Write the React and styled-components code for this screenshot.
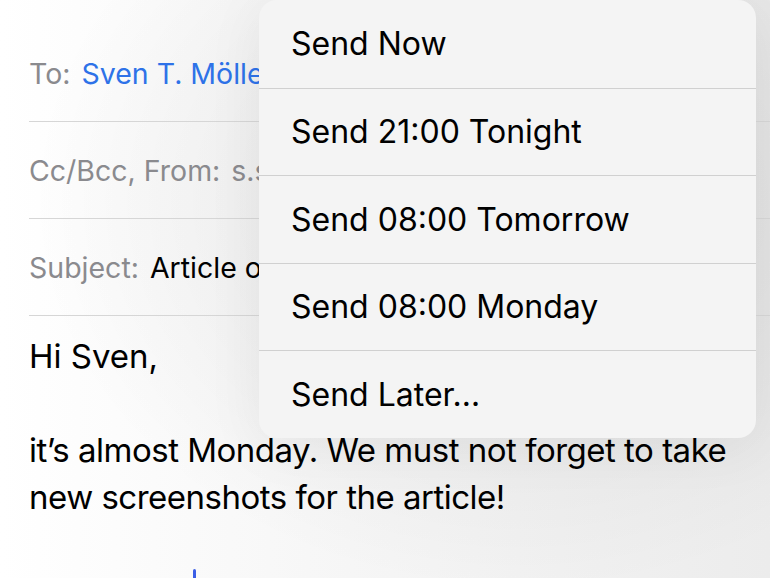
import React from "react";
import styled, { createGlobalStyle } from "styled-components";

const Global = createGlobalStyle`
  html, body { margin: 0; padding: 0; }
  body {
    width: 770px; height: 578px; overflow: hidden;
    font-family: Inter, "Noto Sans", "Liberation Sans", sans-serif;
  }
`;

const Page = styled.div`
  position: relative;
  width: 770px;
  height: 578px;
  overflow: hidden;
  background:
    radial-gradient(ellipse 700px 560px at 520px 200px, rgba(0,0,0,0.09), rgba(0,0,0,0) 70%),
    linear-gradient(90deg, #ffffff 0%, #f7f7f7 40%, #ececec 100%);
  padding: 25px 0 0 29px;
  box-sizing: border-box;
`;

const Field = styled.div`
  height: 96px;
  display: flex;
  align-items: center;
  gap: 11px;
  border-bottom: 1px solid #d6d6d6;
  font-size: 28.5px;
  white-space: nowrap;
`;

const Label = styled.span`
  color: #8a8a8e;
`;

const Value = styled.span`
  color: ${(p) => p.$color || "#000"};
`;

const Body = styled.div`
  width: 735px;
  padding-top: 17px;
  font-size: 33px;
  line-height: 47px;
  color: #000;
`;

const Para = styled.p`
  margin: 0 0 ${(p) => p.$after || 0}px 0;
  letter-spacing: ${(p) => p.$ls || 0}px;
`;

const Cursor = styled.div`
  position: absolute;
  left: 193px;
  top: 569px;
  width: 3px;
  height: 12px;
  border-radius: 2px;
  background: #3b5ee6;
`;

const Menu = styled.div`
  position: absolute;
  left: 259px;
  top: 0;
  width: 497px;
  border-radius: 18px;
  background: #f4f4f4;
  box-shadow: 0 8px 60px rgba(0,0,0,0.06);
  overflow: hidden;
`;

const Item = styled.div`
  box-sizing: border-box;
  height: 87.5px;
  display: flex;
  align-items: center;
  padding-left: 32px;
  font-size: 32px;
  color: #000;
  border-top: ${(p) => (p.$first ? "none" : "1px solid #d0d0d0")};
`;

const items = [
  "Send Now",
  "Send 21:00 Tonight",
  "Send 08:00 Tomorrow",
  "Send 08:00 Monday",
  "Send Later…",
];

export default function App() {
  return (
    <>
      <Global />
      <Page>
        <Field>
          <Label>To:</Label>
          <Value $color="#2e72e8">Sven T. Möller</Value>
        </Field>
        <Field>
          <Label>Cc/Bcc, From:</Label>
          <Value $color="#8a8a8e">s.sandmann@example.com</Value>
        </Field>
        <Field>
          <Label>Subject:</Label>
          <Value>Article on Scheduled Mail</Value>
        </Field>
        <Body>
          <Para $after={47}>Hi Sven,</Para>
          <Para $ls={-0.5}>
            it’s almost Monday. We must not forget to take new screenshots for the article!
          </Para>
        </Body>
        <Cursor />
        <Menu>
          {items.map((t, i) => (
            <Item key={t} $first={i === 0}>
              {t}
            </Item>
          ))}
        </Menu>
      </Page>
    </>
  );
}
